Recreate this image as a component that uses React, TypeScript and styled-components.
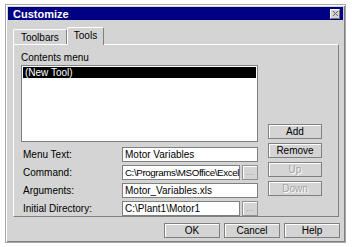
import React from "react";
import styled, { createGlobalStyle } from "styled-components";

const GlobalStyle = createGlobalStyle`
  html, body {
    margin: 0;
    padding: 0;
    background: #ffffff;
  }
  body {
    font-family: "Liberation Sans", Arial, sans-serif;
    font-size: 10px;
    color: #000;
  }
`;

const Page = styled.div`
  width: 352px;
  height: 247px;
  padding: 4px 0 0 5px;
  box-sizing: border-box;
`;

const Dialog = styled.div`
  width: 341px;
  height: 239px;
  box-sizing: border-box;
  background: #d4d4d4;
  border: 1px solid #a8a8a8;
  box-shadow: inset 1px 1px #ffffff, inset -1px -1px #808080;
  padding: 2px;
  display: flex;
  flex-direction: column;
`;

const TitleBar = styled.div`
  height: 13px;
  background: #000084;
  display: flex;
  align-items: center;
  justify-content: space-between;
  padding: 0 3px 0 5px;
`;

const Title = styled.span`
  color: #ffffff;
  font-weight: bold;
  font-size: 11px;
`;

const CloseBox = styled.div`
  width: 10px;
  height: 10px;
  background: #d4d4d4;
  border: 1px solid #ffffff;
  border-right-color: #707070;
  border-bottom-color: #707070;
  box-sizing: border-box;
  display: flex;
  align-items: center;
  justify-content: center;
`;

const Body = styled.div`
  flex: 1;
  display: flex;
  flex-direction: column;
  padding: 7px 3px 0 5px;
`;

const TabRow = styled.div`
  display: flex;
  align-items: flex-end;
  height: 17px;
  position: relative;
  z-index: 1;
`;

const Tab = styled.div<{ $active?: boolean }>`
  box-sizing: border-box;
  height: ${(p) => (p.$active ? 18 : 15)}px;
  padding: 0 ${(p) => (p.$active ? 6 : 7)}px;
  padding-bottom: ${(p) => (p.$active ? 3 : 0)}px;
  margin-bottom: ${(p) => (p.$active ? -1 : 0)}px;
  background: #d4d4d4;
  border-top: 1px solid #ffffff;
  border-left: 1px solid #ffffff;
  border-right: 1px solid #808080;
  border-radius: 2px 2px 0 0;
  display: flex;
  align-items: center;
`;

const Panel = styled.div`
  height: 173px;
  width: 326px;
  box-sizing: border-box;
  border: 1px solid #ffffff;
  border-right-color: #808080;
  border-bottom-color: #808080;
  display: flex;
  padding: 7px 14px 0 7px;
  gap: 10px;
`;

const LeftCol = styled.div`
  width: 237px;
  display: flex;
  flex-direction: column;
`;

const SectionLabel = styled.div`
  height: 12px;
  line-height: 12px;
  margin-bottom: 1px;
`;

const ListBox = styled.div`
  height: 81px;
  background: #ffffff;
  border: 1px solid #808080;
  box-sizing: border-box;
  padding: 1px;
  margin-bottom: 2px;
`;

const ListItem = styled.div<{ $selected?: boolean }>`
  height: 11px;
  line-height: 11px;
  padding-left: 2px;
  background: ${(p) => (p.$selected ? "#000000" : "transparent")};
  color: ${(p) => (p.$selected ? "#ffffff" : "#000000")};
`;

const FieldRow = styled.div`
  display: flex;
  align-items: center;
  height: 15px;
  margin-top: 3px;
`;

const FieldLabel = styled.div`
  width: 101px;
  padding-left: 2px;
  box-sizing: border-box;
`;

const TextBox = styled.div<{ $tight?: boolean }>`
  flex: 1;
  height: 15px;
  box-sizing: border-box;
  background: #ffffff;
  border: 1px solid #808080;
  padding-left: 2px;
  line-height: 13px;
  white-space: nowrap;
  font-size: ${(p) => (p.$tight ? 9.8 : 10)}px;
  letter-spacing: ${(p) => (p.$tight ? -0.4 : 0)}px;
`;

const BrowseButton = styled.div`
  width: 16px;
  height: 15px;
  margin-left: 2px;
  box-sizing: border-box;
  border: 1px solid #909090;
  box-shadow: inset 1px 1px #ffffff;
  color: #9a9a9a;
  font-size: 9px;
  display: flex;
  align-items: flex-end;
  justify-content: center;
  padding-bottom: 2px;
`;

const RightCol = styled.div`
  width: 54px;
  display: flex;
  flex-direction: column;
  gap: 4px;
  padding-top: 72px;
`;

const Button = styled.div<{ $disabled?: boolean; $width?: number }>`
  width: ${(p) => p.$width ?? 54}px;
  height: 15px;
  box-sizing: border-box;
  border: 1px solid #808080;
  box-shadow: inset 1px 1px #ffffff;
  background: #d4d4d4;
  display: flex;
  align-items: center;
  justify-content: center;
  color: ${(p) => (p.$disabled ? "#a4a4a4" : "#000000")};
  text-shadow: ${(p) => (p.$disabled ? "1px 1px #ffffff" : "none")};
`;

const Footer = styled.div`
  display: flex;
  justify-content: flex-end;
  gap: 4px;
  margin-top: 6px;
`;

const fields: { label: string; value: string; browse?: boolean }[] = [
  { label: "Menu Text:", value: "Motor Variables" },
  { label: "Command:", value: "C:\\Programs\\MSOffice\\Excel", browse: true },
  { label: "Arguments:", value: "Motor_Variables.xls" },
  { label: "Initial Directory:", value: "C:\\Plant1\\Motor1", browse: true },
];

const App = () => {
  return (
    <Page>
      <GlobalStyle />
      <Dialog>
        <TitleBar>
          <Title>Customize</Title>
          <CloseBox>
            <svg width="5" height="5" viewBox="0 0 5 5">
              <path d="M0 0L5 5M5 0L0 5" stroke="#606060" strokeWidth="1" />
            </svg>
          </CloseBox>
        </TitleBar>
        <Body>
          <TabRow>
            <Tab>Toolbars</Tab>
            <Tab $active>Tools</Tab>
          </TabRow>
          <Panel>
            <LeftCol>
              <SectionLabel>Contents menu</SectionLabel>
              <ListBox>
                <ListItem $selected>(New Tool)</ListItem>
              </ListBox>
              {fields.map((f) => (
                <FieldRow key={f.label}>
                  <FieldLabel>{f.label}</FieldLabel>
                  <TextBox $tight={f.value.length > 22}>{f.value}</TextBox>
                  {f.browse && <BrowseButton>...</BrowseButton>}
                </FieldRow>
              ))}
            </LeftCol>
            <RightCol>
              <Button>Add</Button>
              <Button>Remove</Button>
              <Button $disabled>Up</Button>
              <Button $disabled>Down</Button>
            </RightCol>
          </Panel>
          <Footer>
            <Button $width={56}>OK</Button>
            <Button $width={56}>Cancel</Button>
            <Button $width={56}>Help</Button>
          </Footer>
        </Body>
      </Dialog>
    </Page>
  );
};

export default App;
